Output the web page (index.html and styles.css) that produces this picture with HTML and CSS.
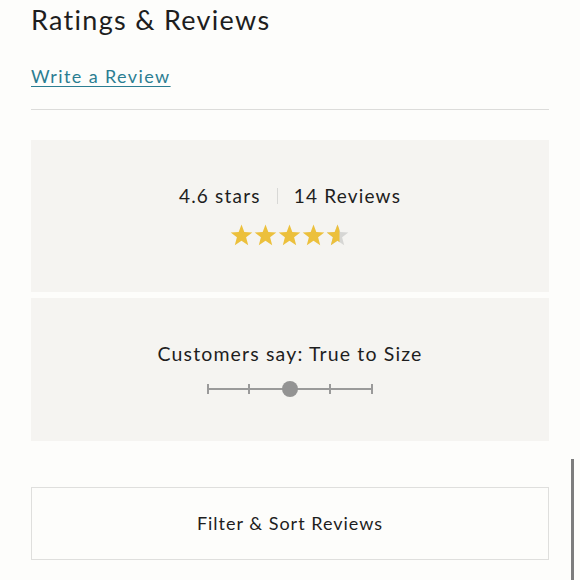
FILE: index.html
```html
<!DOCTYPE html>
<html>
<head>
<meta charset="utf-8">
<link rel="stylesheet" href="styles.css">
</head>
<body>
<div class="page">
  <h2 class="title">Ratings &amp; Reviews</h2>
  <a class="write" href="#">Write a Review</a>
  <hr class="rule">
  <section class="panel summary">
    <div class="stats"><span>4.6 stars</span><span class="sep"></span><span>14 Reviews</span></div>
    <div class="stars">
      <svg width="120" height="23" viewBox="0 0 120 23">
        <defs>
          <path id="st" d="M11.5 0.5 L14.3 8 L22.3 8.4 L16.1 13.3 L18.2 21.2 L11.5 16.8 L4.8 21.2 L6.9 13.3 L0.7 8.4 L8.7 8 Z"/>
          <clipPath id="half"><rect x="0" y="0" width="13.5" height="23"/></clipPath>
        </defs>
        <use href="#st" x="0" fill="#ecc03c"/>
        <use href="#st" x="24" fill="#ecc03c"/>
        <use href="#st" x="48" fill="#ecc03c"/>
        <use href="#st" x="72" fill="#ecc03c"/>
        <use href="#st" x="96" fill="#d6d6d4"/>
        <g transform="translate(96 0)"><use href="#st" fill="#ecc03c" clip-path="url(#half)"/></g>
      </svg>
    </div>
  </section>
  <section class="panel fit">
    <div class="say">Customers say: True to Size</div>
    <svg class="slider" width="166" height="18" viewBox="0 0 166 18">
      <line x1="1" y1="9" x2="165" y2="9" stroke="#9a9a9a" stroke-width="2"/>
      <line x1="1" y1="4" x2="1" y2="14" stroke="#9a9a9a" stroke-width="2"/>
      <line x1="42" y1="4" x2="42" y2="14" stroke="#9a9a9a" stroke-width="2"/>
      <line x1="123" y1="4" x2="123" y2="14" stroke="#9a9a9a" stroke-width="2"/>
      <line x1="165" y1="4" x2="165" y2="14" stroke="#9a9a9a" stroke-width="2"/>
      <circle cx="83" cy="9" r="8" fill="#939393"/>
    </svg>
  </section>
  <button class="filter">Filter &amp; Sort Reviews</button>
</div>
<div class="scrollbar"></div>
</body>
</html>
```
FILE: styles.css
```css
html, body {
  margin: 0;
  padding: 0;
  background: #fdfdfb;
  overflow: hidden;
}
body {
  font-family: Lato, "Open Sans", sans-serif;
  color: #1e1e1e;
  width: 580px;
  height: 580px;
}
.page {
  padding: 0 31px;
  display: flex;
  flex-direction: column;
}
.title {
  margin: 4px 0 0;
  font-size: 27px;
  font-weight: 400;
  letter-spacing: 1.3px;
  line-height: 32px;
}
.write {
  margin-top: 29px;
  align-self: flex-start;
  color: #2b7d92;
  font-size: 18px;
  letter-spacing: 1.4px;
  line-height: 22px;
  text-decoration: underline;
  text-underline-offset: 3px;
  text-decoration-thickness: 1px;
}
.rule {
  margin: 22px 0 0;
  border: 0;
  border-top: 1px solid #dcdcda;
  height: 0;
}
.panel {
  background: #f5f4f1;
  display: flex;
  flex-direction: column;
  align-items: center;
}
.summary {
  margin-top: 30px;
  height: 152px;
  padding-top: 44px;
  box-sizing: border-box;
}
.stats {
  display: flex;
  align-items: center;
  gap: 16px;
  font-size: 19px;
  letter-spacing: 1.2px;
  line-height: 24px;
}
.sep {
  width: 1px;
  height: 16px;
  background: #d8d8d6;
}
.stars {
  margin-top: 16px;
  display: flex;
}
.fit {
  margin-top: 6px;
  height: 143px;
  padding-top: 44px;
  box-sizing: border-box;
}
.say {
  font-size: 19.5px;
  letter-spacing: 1.15px;
  line-height: 24px;
}
.slider {
  margin-top: 14px;
}
.filter {
  margin-top: 46px;
  height: 73px;
  padding: 0 0 2px;
  background: #fdfdfb;
  border: 1px solid #dfdfdd;
  font-family: Lato, "Open Sans", sans-serif;
  font-size: 18px;
  letter-spacing: 1px;
  color: #1e1e1e;
}
.scrollbar {
  position: absolute;
  left: 571px;
  top: 459px;
  width: 3px;
  height: 121px;
  background: #7d7d7d;
}
```
